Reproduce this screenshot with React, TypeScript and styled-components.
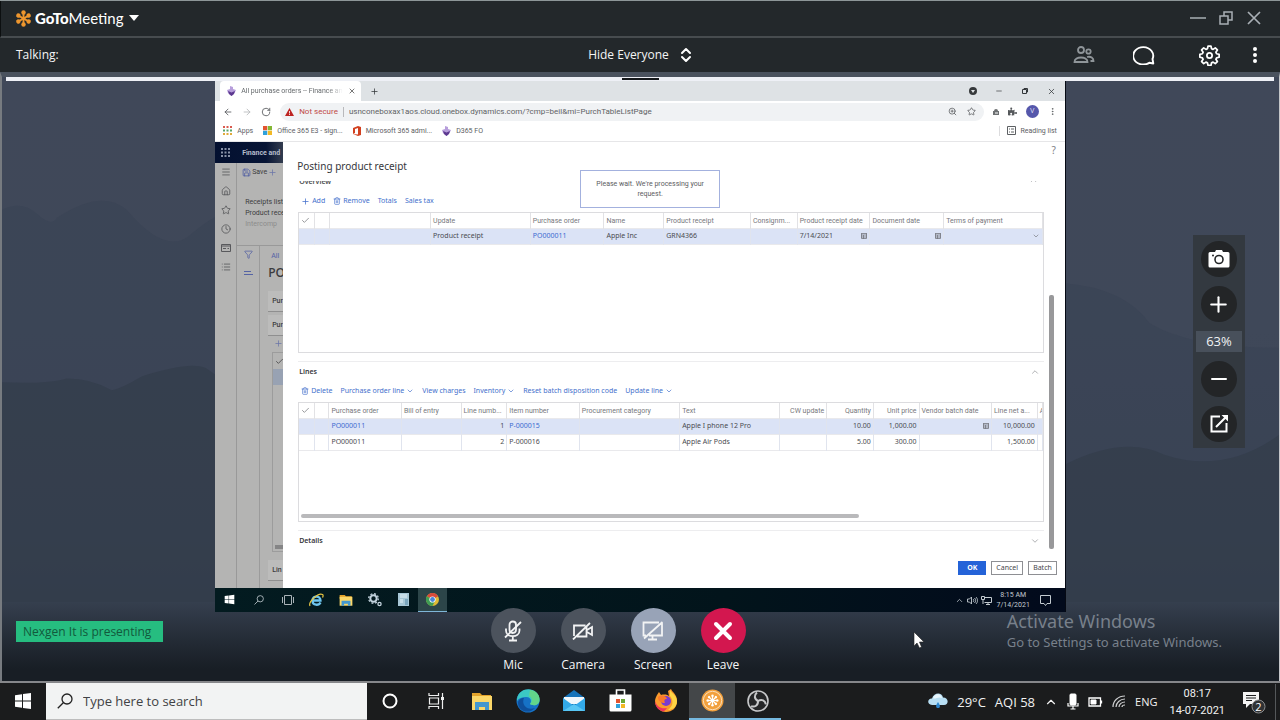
import React from "react";
import styled, { createGlobalStyle } from "styled-components";
import {
  Check,
  ChevronDown,
  ChevronUp,
  Clock,
  Filter,
  House,
  List,
  Menu,
  Minus,
  MoreVertical,
  Newspaper,
  Plus,
  RotateCw,
  ArrowLeft,
  ArrowRight,
  Save,
  Star,
  Trash2,
  X,
  ZoomIn,
} from "lucide-react";
import { FaPuzzlePiece, FaWindows } from "react-icons/fa";

const GlobalStyle = createGlobalStyle`
  * {
    box-sizing: border-box;
  }

  body {
    margin: 0;
    background: #1b1c1d;
    font-family: "Open Sans", "Noto Sans", sans-serif;
  }

  button {
    border: none;
    padding: 0;
    background: none;
    color: inherit;
    font: inherit;
    cursor: pointer;
  }

  svg {
    display: block;
    flex: none;
  }
`;

const Screen = styled.div`
  display: flex;
  flex-direction: column;
  min-height: 100vh;
`;

// Meeting window
const MeetingWindow = styled.div`
  display: flex;
  flex-direction: column;
  flex: 1;
  border-top: 1px solid #8d9698;
  border-bottom: 2px solid #86878a;
`;

const TitleBar = styled.header`
  display: flex;
  align-items: center;
  justify-content: space-between;
  height: 37px;
  padding: 0 18px 1px 14px;
  border-left: 1px solid #0c0f10;
  border-bottom: 2px solid #474c4f;
  background: #23282b;
  color: #fff;
`;

const Brand = styled.button`
  display: flex;
  align-items: center;
  gap: 3px;
  font-family: Lato, sans-serif;
  font-size: 15px;
  line-height: 20px;

  b {
    font-weight: 900;
  }
`;

const Caret = styled.span`
  margin-left: 3px;
  border: 5px solid transparent;
  border-top: 6px solid #fff;
  border-bottom: 0;
`;

const WindowButtons = styled.div`
  display: flex;
  gap: 12px;
  color: #a9afb5;
`;

const TalkingBar = styled.div`
  display: grid;
  grid-template-columns: 1fr auto 1fr;
  align-items: center;
  height: 34px;
  padding: 0 16px 0 16px;
  background: #23282b;
  color: #f4f5f5;
  font-size: 12px;
  line-height: 16px;
`;

const HideButton = styled.button`
  display: flex;
  align-items: center;
  gap: 11px;
`;

const HeaderActions = styled.div`
  display: flex;
  align-items: center;
  justify-content: flex-end;

  button {
    display: grid;
    place-items: center;
  }

  button:nth-child(2) {
    margin-left: 38px;
  }

  button:nth-child(3) {
    margin-left: 44px;
  }

  button:nth-child(4) {
    margin-left: 26px;
  }
`;

const Stage = styled.main`
  position: relative;
  display: flex;
  flex-direction: column;
  flex: 1;
  padding: 0 3px 69px;
  border-top: 5px solid #4a525e;
  border-left: 2px solid #777b80;
  border-right: 1px solid #c4c6c9;
  background: linear-gradient(
    180deg,
    #404859 0,
    #3f4859 42%,
    #3b4455 75%,
    #353f4e 87%,
    #222933 94%,
    #181e25 98%
  );
`;

const Mountains = styled.svg`
  position: absolute;
  inset: 0;
  width: 100%;
  height: 87%;
`;

const DragStrip = styled.div`
  position: relative;
  display: flex;
  align-items: center;
  justify-content: center;
  height: 4px;
  margin: 0 2px 0 1px;
  background: #eef0f6;
`;

const DragHandle = styled.span`
  width: 37px;
  height: 2px;
  background: #15181b;
`;

const ShareArea = styled.div`
  position: relative;
  display: grid;
  grid-template-columns: 210fr 850fr 210fr;
  flex: 1;
`;

const ZoomColumn = styled.aside`
  display: flex;
  align-items: flex-start;
  justify-content: flex-end;
  padding: 154px 31px 0 0;
`;

const ZoomPanel = styled.div`
  display: flex;
  flex-direction: column;
  align-items: center;
  gap: 9px;
  width: 52px;
  padding: 6px 3px;
  background: #333940;
`;

const RoundButton = styled.button`
  display: grid;
  place-items: center;
  width: 36px;
  height: 36px;
  border-radius: 50%;
  background: #232527;
  color: #fff;
`;

const ZoomLevel = styled.output`
  width: 100%;
  background: #48505b;
  color: #f1f3f4;
  font-size: 13px;
  line-height: 21px;
  text-align: center;
`;

// Shared desktop
const Desktop = styled.section`
  display: flex;
  flex-direction: column;
  min-width: 0;
  border-right: 1px solid #060a14;
  background: #fff;
  color: #4d4d50;
  font-family: Roboto, "Open Sans", sans-serif;
  font-size: 7px;
  line-height: 10px;
`;

const TabStrip = styled.div`
  display: flex;
  align-items: center;
  height: 20px;
  padding-left: 5px;
  background: #dee2e5;
  color: #33373a;
`;

const Tab = styled.div`
  display: flex;
  align-items: center;
  gap: 5px;
  width: 141px;
  height: 100%;
  padding: 0 5px 0 7px;
  border-radius: 4px 4px 0 0;
  background: #fff;
  color: #666a6d;
`;

const TabTitle = styled.span`
  flex: 1;
  white-space: nowrap;
  mask-image: linear-gradient(90deg, #000 85%, transparent);
`;

const NewTab = styled.button`
  margin-left: 9px;
`;

const BrowserButtons = styled.div`
  display: flex;
  align-items: center;
  gap: 18px;
  margin-left: auto;
  padding-right: 9px;
`;

const AddressRow = styled.div`
  display: flex;
  align-items: center;
  gap: 9px;
  height: 21px;
  padding: 0 8px;
  color: #55585b;
`;

const AddressBar = styled.div`
  display: flex;
  align-items: center;
  gap: 5px;
  flex: 1;
  height: 18px;
  padding: 0 8px 0 5px;
  border-radius: 9px;
  background: #f0f2f4;
`;

const NotSecure = styled.span`
  padding-right: 5px;
  border-right: 1px solid #b9b9bc;
  color: #c04a48;
  font-size: 8px;
`;

const AddressInput = styled.input`
  flex: 1;
  min-width: 0;
  padding: 0;
  border: 0;
  background: none;
  color: #5f6265;
  font: inherit;
  font-size: 8px;
`;

const Avatar = styled.span`
  width: 13px;
  border-radius: 50%;
  background: #5557ab;
  color: #dcdcf4;
  line-height: 13px;
  text-align: center;
`;

const Bookmarks = styled.nav`
  display: flex;
  align-items: center;
  gap: 10px;
  height: 20px;
  padding: 0 8px 2px;
  border-bottom: 1px solid #e6e6e8;
`;

const Bookmark = styled.a`
  display: flex;
  align-items: center;
  gap: 5px;
  color: #5d6063;
  text-decoration: none;
  white-space: nowrap;

  &:last-child {
    margin-left: auto;
    padding-left: 7px;
    border-left: 1px solid #dcdcde;
  }
`;

const AppArea = styled.div`
  display: grid;
  grid-template-columns: 68fr 782fr;
  flex: 1;
`;

const Backdrop = styled.div`
  display: flex;
  flex-direction: column;
  min-width: 0;
  overflow: hidden;
  background: #b4b4b3;
  color: #3c3c3e;
  white-space: nowrap;
`;

const AppHeader = styled.div`
  display: flex;
  align-items: center;
  gap: 12px;
  height: 21px;
  padding-left: 6px;
  background: linear-gradient(90deg, #031030, #071535 75%, #333c4f);
  color: #b5bccb;
  font-weight: 700;
`;

const BackdropBody = styled.div`
  display: flex;
  flex: 1;
`;

const Rail = styled.div`
  display: flex;
  flex-direction: column;
  flex: none;
  align-items: center;
  gap: 9px;
  width: 22px;
  padding-top: 4px;
  border-right: 1px solid #999;
  color: #58595c;
`;

const RecordArea = styled.div`
  display: flex;
  flex-direction: column;
  width: 46px;
`;

const RecordMenu = styled.div`
  height: 83px;
  padding: 4px 0 0 8px;
  border-bottom: 1px solid #999;
`;

const RecordAction = styled.p<{ $muted?: boolean }>`
  margin: 0;
  color: ${(props) => (props.$muted ? "#8c8c8c" : "inherit")};
  line-height: 11px;
`;

const SaveLine = styled.div`
  display: flex;
  align-items: center;
  gap: 1px;
  margin: 0 0 20px -3px;
`;

const RecordBody = styled.div`
  display: flex;
  flex: 1;
`;

const FilterRail = styled.div`
  display: flex;
  flex-direction: column;
  flex: none;
  align-items: center;
  gap: 10px;
  width: 23px;
  padding-top: 4px;
  border-right: 1px solid #9b9b9b;
  color: #5563a4;
`;

const RecordPage = styled.div`
  display: flex;
  flex-direction: column;
  flex: 1;
  min-width: 0;
  padding: 5px 0 4px 8px;
  color: #3c3c3e;
`;

const RecordLink = styled.a`
  padding-left: 3px;
  color: #5261a6;
  text-decoration: none;
`;

const RecordTitle = styled.strong`
  margin-bottom: 6px;
  font-family: "Open Sans", sans-serif;
  font-size: 12px;
  font-weight: 600;
  line-height: 24px;
`;

const RecordCard = styled.div`
  margin-bottom: 3px;
  padding-left: 4px;
  border-bottom: 1px solid #8f8f8f;
  background: #bcbcbb;
  font-weight: 500;
  line-height: 20px;
`;

const RecordGrid = styled.div`
  display: flex;
  flex-direction: column;
  justify-content: space-between;
  flex: 1;
  margin: 4px 0 8px 4px;
  border: 1px solid #9c9c9c;
  border-right: 0;
`;

const RecordGridHead = styled.div`
  height: 32px;
  padding: 4px 0 0 2px;
  border-bottom: 16px solid #98a2b3;
`;

const RecordGridBar = styled.span`
  height: 4px;
  margin: 0 0 2px 2px;
  background: #858586;
`;

// Posting dialog
const Dialog = styled.form`
  position: relative;
  display: flex;
  flex-direction: column;
  min-width: 0;
  background: #fff;
  font-family: "Noto Sans", "Open Sans", sans-serif;
`;

const DialogTop = styled.div`
  display: flex;
  align-items: flex-end;
  justify-content: space-between;
  height: 39px;
  padding: 0 9px 7px 14px;
`;

const DialogTitle = styled.h1`
  margin: 0;
  color: #36373b;
  font-size: 10px;
  font-weight: 400;
  line-height: 16px;
`;

const HelpButton = styled.button`
  align-self: flex-start;
  color: #808185;
  font-size: 10px;
  line-height: 16px;
`;

const DialogBody = styled.div`
  display: flex;
  flex: 1;
`;

const Sections = styled.div`
  display: flex;
  flex-direction: column;
  flex: 1;
  min-width: 0;
  padding: 0 0 3px 15px;
`;

const ScrollGutter = styled.div`
  display: flex;
  align-items: flex-end;
  width: 21px;
  padding: 0 0 3px 5px;
`;

const ScrollThumb = styled.span`
  width: 5px;
  height: 69%;
  border-radius: 2px;
  background: #98989a;
`;

// Half scrolled away under the title
const ClippedHeading = styled.div`
  display: flex;
  align-items: flex-end;
  justify-content: space-between;
  height: 4px;
  margin-bottom: 5px;
  padding: 0 6px 0 1px;
  overflow: hidden;
  color: #4c4d50;
  font-weight: 600;
  line-height: 6px;

  svg {
    color: #a0a1a5;
  }
`;

const SectionHeading = styled.button`
  display: flex;
  align-items: center;
  justify-content: space-between;
  height: 19px;
  margin-top: 8px;
  padding: 2px 4px 0 1px;
  border-top: 1px solid #ededef;
  color: #36373b;
  font-weight: 600;

  svg {
    color: #a0a1a5;
  }
`;

const Toolbar = styled.div`
  display: flex;
  align-items: center;
  gap: 8px;
  height: 22px;
  padding-left: 3px;
  color: #4470cc;

  button {
    display: flex;
    align-items: center;
    gap: 2px;
    white-space: nowrap;
  }
`;

const GridFrame = styled.div<{ $grow?: boolean }>`
  display: flex;
  flex-direction: column;
  justify-content: space-between;
  flex: ${(props) => (props.$grow ? "1" : "none")};
  min-height: 120px;
  border: 1px solid #dcdcdf;
`;

const Table = styled.table`
  width: 100%;
  table-layout: fixed;
  border-collapse: collapse;
`;

const HeadCell = styled.th<{ $right?: boolean }>`
  height: 15px;
  padding: 1px 2px 0;
  border-right: 1px solid #e2e2e5;
  overflow: hidden;
  color: #77787c;
  font-family: Roboto, sans-serif;
  font-weight: 400;
  text-align: ${(props) => (props.$right ? "right" : "left")};
  white-space: nowrap;
`;

const Row = styled.tr<{ $selected?: boolean }>`
  border-bottom: 1px solid #e9e9ec;
  background: ${(props) => (props.$selected ? "#dbe3f6" : "#fff")};
`;

const Cell = styled.td<{ $right?: boolean }>`
  height: 16px;
  padding: 0 2px;
  border-right: 1px solid #e0e4ee;
  color: #4a4b50;
  text-align: ${(props) => (props.$right ? "right" : "left")};
  white-space: nowrap;

  svg {
    margin-left: auto;
    color: #75777f;
  }
`;

const CellLink = styled.a`
  color: #3c6bd0;
  text-decoration: none;
`;

const DateCell = styled.div`
  display: flex;
  align-items: center;
`;

const HorizontalThumb = styled.span`
  width: 75%;
  height: 4px;
  margin: 0 0 3px 2px;
  border-radius: 2px;
  background: #b9b9bb;
`;

const DialogFooter = styled.footer`
  display: flex;
  align-items: center;
  justify-content: flex-end;
  gap: 5px;
  height: 36px;
  padding: 0 8px 4px 0;
`;

const DialogButton = styled.button<{ $primary?: boolean }>`
  height: 14px;
  padding: 0 ${(props) => (props.$primary ? "8px" : "4px")};
  border: 1px solid ${(props) => (props.$primary ? "#2463d8" : "#8e8f93")};
  background: ${(props) => (props.$primary ? "#2463d8" : "#fff")};
  color: ${(props) => (props.$primary ? "#fff" : "#47484c")};
  font-weight: ${(props) => (props.$primary ? "700" : "400")};
  line-height: 12px;
`;

const WaitBox = styled.div`
  position: absolute;
  top: 28px;
  left: 38%;
  width: 140px;
  padding: 8px 12px;
  border: 1px solid #a3b1de;
  background: #fff;
  color: #5c5d61;
  font-family: Roboto, sans-serif;
  text-align: center;
`;

// Taskbar inside the shared desktop
const RemoteTaskbar = styled.div`
  display: flex;
  align-items: center;
  height: 24px;
  background: linear-gradient(90deg, #031b20, #02141b 60%, #020a1c);
  color: #c3cbd0;
`;

const RemoteApp = styled.button<{ $active?: boolean }>`
  display: grid;
  place-items: center;
  width: 29px;
  height: 100%;
  background: ${(props) => (props.$active ? "#2c4549" : "none")};
  border-bottom: 1px solid ${(props) => (props.$active ? "#7fb6d8" : "transparent")};
`;

const RemoteTray = styled.div`
  display: flex;
  align-items: center;
  gap: 3px;
  margin-left: auto;
  padding-right: 14px;

  time {
    margin: 0 7px 0 2px;
    text-align: center;
  }
`;

// Controls laid over the stage
const Presenting = styled.div`
  position: absolute;
  left: 14px;
  bottom: 39px;
  padding: 0 12px 0 7px;
  background: #26bd80;
  color: #12593c;
  font-size: 12px;
  line-height: 21px;
`;

const Controls = styled.div`
  position: absolute;
  right: 0;
  bottom: 8px;
  left: 0;
  display: flex;
  justify-content: center;
  padding-right: 45px;
`;

const Control = styled.button`
  display: flex;
  flex-direction: column;
  align-items: center;
  gap: 3px;
  width: 70px;
  color: #f5f6f7;
  font-size: 12px;
  line-height: 17px;
`;

const ControlCircle = styled.span<{ $color: string }>`
  display: grid;
  place-items: center;
  width: 45px;
  height: 45px;
  border-radius: 50%;
  background: ${(props) => props.$color};
`;

const Watermark = styled.div`
  position: absolute;
  right: 57px;
  bottom: 29px;
  color: #78808b;
  font-family: "Noto Sans", sans-serif;
  font-size: 13px;
  line-height: 20px;

  p {
    margin: 0;
  }

  p:first-child {
    font-size: 18px;
    line-height: 22px;
  }
`;

const Pointer = styled.svg`
  position: absolute;
  right: 354px;
  bottom: 32px;
`;

// Host taskbar
const Taskbar = styled.footer`
  display: flex;
  height: 37px;
  background: #1b1c1d;
  color: #f2f2f2;
`;

const TaskButton = styled.button<{ $active?: boolean; $running?: boolean }>`
  display: grid;
  place-items: center;
  width: 46px;
  background: ${(props) => (props.$active ? "#444749" : "none")};
  border-bottom: 2px solid ${(props) => (props.$active || props.$running ? "#76b9e0" : "transparent")};
`;

const SearchBox = styled.label`
  display: flex;
  align-items: center;
  gap: 10px;
  flex: 0 1 321px;
  padding-left: 11px;
  border-bottom: 1px solid #bdbdbd;
  background: #f2f3f3;
  color: #222;

  input {
    flex: 1;
    min-width: 0;
    padding: 0;
    border: 0;
    outline: 0;
    background: none;
    font: 13px "Open Sans", sans-serif;
  }

  input::placeholder {
    color: #414244;
    opacity: 1;
  }
`;

const Tray = styled.div`
  display: flex;
  align-items: center;
  gap: 9px;
  margin-left: auto;
  padding-right: 4px;
  font-size: 13px;
  white-space: nowrap;
`;

const Language = styled.span`
  font-size: 11px;
`;

const HostClock = styled.time`
  margin: 0 8px 0 3px;
  font-family: Roboto, sans-serif;
  font-size: 11px;
  line-height: 17px;
  text-align: center;
`;

const ShowDesktop = styled.span`
  width: 1px;
  height: 36px;
  background: #55585a;
`;

const PETALS = [0, 45, 90, 135, 180, 225, 270, 315];
const SIX_PETALS = [0, 60, 120, 180, 240, 300];

const Daisy = () => (
  <svg width="17" height="17" viewBox="-10 -10 20 20">
    {SIX_PETALS.map((angle) => (
      <g key={angle} transform={`rotate(${angle})`}>
        <path d="M0-1V-7" stroke="#ee962e" strokeWidth="2.200" />
        <circle cy="-7" r="2.600" fill="#ee962e" />
      </g>
    ))}
    <circle r="2" fill="#ee962e" />
  </svg>
);

const Sorter = () => (
  <svg width="12" height="16" viewBox="0 0 12 16" fill="none" stroke="#fff" strokeWidth="2" strokeLinejoin="round">
    <path d="M2 6l4-4 4 4M2 10l4 4 4-4" strokeLinecap="round" />
  </svg>
);

const People = () => (
  <svg width="22" height="18" viewBox="0 0 22 18" fill="none" stroke="#8f9599" strokeWidth="1.800">
    <circle cx="8" cy="4" r="3" />
    <circle cx="15.500" cy="5.500" r="2.200" />
    <path d="M1.500 16c0-6 13-6 13 0zM14 11c4-1 6.500 1 6.500 4h-3" />
  </svg>
);

const Bubble = () => (
  <svg width="22" height="20" viewBox="0 0 22 20" fill="none" stroke="#fff" strokeWidth="1.900" strokeLinejoin="round">
    <path d="M19.500 14l.8 4.500-4-.8A10 8.700 0 1 1 19.500 14z" />
  </svg>
);

const Gear = () => (
  <svg width="21" height="21" viewBox="-12 -12 24 24" fill="none" stroke="#fff" strokeWidth="2" strokeLinejoin="round">
    <path d="M-1.700-10.700h3.400l.6 2.900 1.800.8 2.500-1.700 2.400 2.400-1.700 2.500.8 1.800 2.900.6v3.400l-2.900.6-.8 1.800 1.700 2.500-2.400 2.400-2.500-1.700-1.800.8-.6 2.900h-3.400l-.6-2.900-1.800-.8-2.500 1.700-2.400-2.400 1.700-2.500-.8-1.800-2.900-.6v-3.400l2.900-.6.8-1.800-1.700-2.500 2.400-2.400 2.500 1.700 1.800-.8z" />
    <circle r="3" />
  </svg>
);

const D365 = () => (
  <svg width="9" height="10" viewBox="0 0 9 10">
    <path d="M3 0l3 1v2l3 1-1.500 3L4.500 10 1 7 0 4l3-1z" fill="#b79edb" />
    <path d="M1 5l3.500 1.500L8 5 7 8 4.500 10 2 8z" fill="#5d3990" />
  </svg>
);

const DotGrid = ({ colors, size = 9 }: { colors: string[]; size?: number }) => (
  <svg width={size} height={size} viewBox="0 0 9 9">
    {[0, 1, 2].map((r) =>
      [0, 1, 2].map((c) => (
        <rect key={`${r}${c}`} x={c * 3.5} y={r * 3.5} width="2" height="2" fill={colors[r % colors.length]} />
      ))
    )}
  </svg>
);

const FourSquares = ({ size }: { size: number }) => (
  <svg width={size} height={size} viewBox="0 0 10 10">
    <path d="M0 0h4.700v4.700H0z" fill="#e35430" />
    <path d="M5.300 0H10v4.700H5.300z" fill="#83b735" />
    <path d="M0 5.300h4.700V10H0z" fill="#2ea1dc" />
    <path d="M5.300 5.300H10V10H5.300z" fill="#f2b824" />
  </svg>
);

const OfficeMark = () => (
  <svg width="8" height="10" viewBox="0 0 8 10">
    <path d="M0 2l5-2 3 1v8l-3 1-5-2 5 .5V2L2 3v4L0 8z" fill="#d2401f" />
  </svg>
);

const Warning = () => (
  <svg width="9" height="8" viewBox="0 0 9 8">
    <path d="M4.500 0L9 8H0z" fill="#bd2422" />
    <path d="M4.500 3v2.500M4.500 6v1" stroke="#f0d5d5" />
  </svg>
);

const CalendarMark = () => (
  <svg width="6" height="6" viewBox="0 0 6 6" fill="none" stroke="currentColor">
    <path d="M0 .5h6M.5.5v5h5v-5M0 2h6M2.500 2v4M0 4h6" strokeWidth=".8" />
  </svg>
);

const Folder = ({ size }: { size: number }) => (
  <svg width={size} height={size} viewBox="0 0 22 22">
    <path d="M1 3h8l2 2h9v4H1z" fill="#e3a32b" />
    <path d="M1 6h20v14H1z" fill="#fbd769" />
    <path d="M4 12h14v8h-4v-3H8v3H4z" fill="#4397cf" />
  </svg>
);

const InternetExplorer = () => (
  <svg width="15" height="14" viewBox="0 0 15 14" fill="none">
    <path d="M3.500 7.500h8c0-5-8-5.500-8 0 0 5.500 6.500 5 8 2" stroke="#6ec5ef" strokeWidth="2.300" />
    <path d="M1 13C-1 9 9-.5 13.500 1.500c1 .5.500 2 0 3" stroke="#e8c744" strokeWidth="1.200" />
  </svg>
);

const Cogs = () => (
  <svg width="14" height="14" viewBox="0 0 14 14" fill="none" stroke="#c3d3de">
    <circle cx="5.500" cy="5.500" r="3.200" strokeWidth="2" />
    <circle cx="5.500" cy="5.500" r="4.800" strokeWidth="1.300" strokeDasharray="1.900 1.870" />
    <circle cx="11.500" cy="11" r="1.600" strokeWidth="1.300" />
  </svg>
);

const ServerIcon = () => (
  <svg width="11" height="13" viewBox="0 0 11 13">
    <path d="M0 0h11v13H0z" fill="#a7c7d6" />
    <path d="M2 2h7M2 4h7M2 7h3M2 9h3" stroke="#e8f4fa" />
    <path d="M7 6h3v6H7z" fill="#7ba6bd" />
  </svg>
);

const Chrome = () => (
  <svg width="13" height="13" viewBox="-10 -10 20 20">
    <circle r="10" fill="#e0ba35" />
    <path d="M0 0L-8.700-5A10 10 0 0 1 8.700-5z" fill="#d84a3b" />
    <path d="M0 0L-8.700-5A10 10 0 0 0 0 10l4-8z" fill="#3f9d55" />
    <circle r="4.800" fill="#fff" />
    <circle r="3.700" fill="#4a86d8" />
  </svg>
);

const TaskViewSmall = () => (
  <svg width="12" height="10" viewBox="0 0 12 10" fill="none" stroke="#aab3b8">
    <path d="M2.500.5h7v9h-7zM.5 2v6M11.500 2v6" />
  </svg>
);

const SpeakerSmall = () => (
  <svg width="11" height="9" viewBox="0 0 11 9" fill="none" stroke="#c3cbd0" strokeWidth=".9">
    <path d="M.5 3h2l2-2v7l-2-2h-2zM6 3c1 1 1 2 0 3M7.500 2c1.500 1.500 1.500 3.500 0 5M9 1c2 2 2 5 0 7" />
  </svg>
);

const NetworkSmall = () => (
  <svg width="11" height="9" viewBox="0 0 11 9" fill="none" stroke="#c3cbd0">
    <path d="M4 1.500h6.500v5H3.500M5 8.500h4M7 6v2M.5.5h3v3h-3zM2 3.500V8" />
  </svg>
);

const NoteSmall = () => (
  <svg width="11" height="11" viewBox="0 0 11 11" fill="none" stroke="#c3cbd0">
    <path d="M.5.5h10v8H7l-1.500 2L4 8.500H.5z" />
  </svg>
);

const CameraSolid = () => (
  <svg width="22" height="18" viewBox="0 0 22 18">
    <path d="M2 2h5l1-2h6l1 2h5q1.500 0 1.500 1.500V16q0 1.500-1.500 1.500H2Q.5 17.500.5 16V3.500Q.5 2 2 2z" fill="#fff" />
    <circle cx="11" cy="9.500" r="4" fill="none" stroke="#232527" strokeWidth="1.600" />
    <circle cx="5" cy="5.500" r="1" fill="#232527" />
  </svg>
);

const PopOut = () => (
  <svg width="20" height="20" viewBox="0 0 20 20" fill="none" stroke="#fff" strokeWidth="2">
    <path d="M11 2.500H2.500v15h15V9M7 13L17 3" />
    <path d="M12.500 1H19v6.500z" fill="#fff" stroke="none" />
  </svg>
);

const MicOffIcon = () => (
  <svg width="20" height="22" viewBox="0 0 20 22" fill="none" stroke="#f2f3f4" strokeWidth="1.800">
    <rect x="6.500" y="1.500" width="6.500" height="11.500" rx="3.200" />
    <path d="M3 8.500v2c0 7.500 13.500 7.500 13.500 0v-2M9.800 16.500V20M6 20.500h8M2 17.500L18 2" />
  </svg>
);

const CameraOffIcon = () => (
  <svg width="24" height="18" viewBox="0 0 24 18" fill="none" stroke="#f2f3f4" strokeWidth="1.800">
    <path d="M3 14V3.500h11.500M15.500 5v9.500H6M16 8l5-3v8l-5-3M2 17.500L19 1" />
  </svg>
);

const ScreenOffIcon = () => (
  <svg width="22" height="20" viewBox="0 0 22 20" fill="none" stroke="#f2f3f4" strokeWidth="1.800">
    <path d="M17 1.500H1.500v13H4M20 4v10.500H7M20 1.500v4M6 18.500h9M10.500 15v3M2 17.500L20.500 1" />
  </svg>
);

const LeaveIcon = () => (
  <svg width="20" height="20" viewBox="0 0 20 20">
    <path d="M3 3l14 14M17 3L3 17" stroke="#fff" strokeWidth="4" strokeLinecap="round" />
  </svg>
);

const StartIcon = () => (
  <svg width="16" height="16" viewBox="0 0 16 16" fill="#fff">
    <path d="M0 2.200l7-1v6.300H0zM8 1l8-1v7.500H8zM0 8.500h7v6.300l-7-1zM8 8.500h8V16l-8-1z" />
  </svg>
);

const SearchGlass = ({ size }: { size: number }) => (
  <svg width={size} height={size} viewBox="0 0 16 16" fill="none" stroke="currentColor" strokeWidth="1.300">
    <circle cx="10" cy="6" r="5" />
    <path d="M6.500 9.500L.8 15.200" />
  </svg>
);

const TaskViewIcon = () => (
  <svg width="17" height="16" viewBox="0 0 17 16" fill="none" stroke="#eee" strokeWidth="1.200">
    <path d="M1 0v2.500h9.500V0M1.500 5h9v6h-9zM1 16v-2.500h9.500V16M14.500 0v16" />
    <path d="M13 4h3v3h-3z" fill="#eee" stroke="none" />
  </svg>
);

const EdgeIcon = () => (
  <svg width="24" height="24" viewBox="0 0 24 24">
    <circle cx="12" cy="12" r="11.500" fill="#1672c6" />
    <path d="M1 10C3-3 23-3 23.500 11c0 6-7 6-9.500 4 2-3 1-7-4-7-4 0-7 1-9 4z" fill="#3bc8c4" />
    <path d="M14 1c8 1 10 7 9.500 10 0 6-7 6-9.500 4 4-4 1-7-1-8z" fill="#62d68a" />
    <path d="M8 9c-3 7 3 13 11 10-6 7-17 3-17-5 0-3 3-5 6-5z" fill="#0e4f9b" />
  </svg>
);

const MailIcon = () => (
  <svg width="24" height="22" viewBox="0 0 24 22">
    <path d="M1 8L12 0l11 8v13H1z" fill="#1673b9" />
    <path d="M2 7h20v7H2z" fill="#f1f7fb" />
    <path d="M1 8l11 8 11-8v13H1z" fill="#33a9e8" />
    <path d="M1 21l11-7 11 7z" fill="#58c6f4" />
  </svg>
);

const StoreIcon = () => (
  <svg width="23" height="23" viewBox="0 0 23 23">
    <path d="M7.500 6V1h8v5" fill="none" stroke="#fff" strokeWidth="1.600" />
    <path d="M.5 5.500h22V21q0 1.500-1.500 1.500H2Q.5 22.500.5 21z" fill="#fff" />
    <path d="M7 10h4v4H7z" fill="#e35430" />
    <path d="M12 10h4v4h-4z" fill="#6ba935" />
    <path d="M7 15h4v4H7z" fill="#2ea1dc" />
    <path d="M12 15h4v4h-4z" fill="#f2b824" />
  </svg>
);

const FirefoxIcon = () => (
  <svg width="22" height="23" viewBox="0 0 22 23">
    <path d="M2 6l2-3 2 3c4-1 7 0 8 1l-1-5 3-2c1 3 6 5 6 12 0 7-5 11-11 11S0 18 0 12c0-2 1-4 2-6z" fill="#fb9a2c" />
    <path d="M15 1c1 3 7 5 7 11 0 7-6 9-9 9 5-4 6-9 2-14z" fill="#ffd545" />
    <path d="M0 12c2 6 6 8 12 7-2 3-4 4-5 3-4-1-7-5-7-10z" fill="#ee335b" />
    <circle cx="11" cy="12" r="5" fill="#7a3bd0" />
    <path d="M3 8c4-3 8-1 9 2-3 0-3 2-2 4-4 0-7-2-7-6z" fill="#fb7a2b" />
  </svg>
);

const GoToIcon = () => (
  <svg width="23" height="23" viewBox="-12 -12 24 24">
    <circle r="11.500" fill="#f2a03c" />
    <circle r="9.600" fill="none" stroke="#fae0bd" />
    {PETALS.map((angle) => (
      <g key={angle} transform={`rotate(${angle})`}>
        <path d="M0 0V-5" stroke="#fff" strokeWidth="1.300" />
        <circle cy="-5" r="1.300" fill="#fff" />
      </g>
    ))}
  </svg>
);

const ObsIcon = () => (
  <svg width="22" height="22" viewBox="-11 -11 22 22" fill="none" stroke="#c7c8ca">
    <circle r="10" strokeWidth="1.600" fill="#252628" />
    {[0, 120, 240].map((angle) => (
      <path key={angle} transform={`rotate(${angle})`} d="M0 0C-4-2-4-6-1-8.500" strokeWidth="2" />
    ))}
  </svg>
);

const CloudIcon = () => (
  <svg width="20" height="17" viewBox="0 0 20 17">
    <path d="M4 12C-2 11 0 5 4 5.500 6-1 14-1 15 4.500c6 0 6 7.500 1 7.500z" fill="#b7def3" />
    <path d="M5 5C7 0 13 0 14 5 10 3 7 7 5 5z" fill="#e9f6fd" />
    <path d="M10 9c3 4 2 6 0 6s-3-2 0-6z" fill="#2c86cf" />
  </svg>
);

const MicTray = () => (
  <svg width="12" height="17" viewBox="0 0 12 17" fill="none" stroke="#fff">
    <rect x="3" y="1" width="6" height="11" rx="1" fill="#fff" />
    <path d="M1 10v3h10v-3M6 13v3M3.500 16h5" strokeWidth="1.200" />
  </svg>
);

const BatteryTray = () => (
  <svg width="15" height="10" viewBox="0 0 15 10" fill="none" stroke="#fff">
    <path d="M1 1h11.500v8H1zM13.500 3.500v3" strokeWidth="1.300" />
    <path d="M3 3h5v4H3z" fill="#fff" />
  </svg>
);

const WifiTray = () => (
  <svg width="14" height="13" viewBox="0 0 14 13" fill="none" stroke="#cfd0d1" strokeWidth="1.200">
    <path d="M1 12C1 6 6 1 13 1M4 12c0-4 4-8 9-8M7 12c0-3 3-5 6-5M10 12c0-1 1-2 3-2" />
  </svg>
);

const NotificationTray = () => (
  <svg width="24" height="24" viewBox="0 0 24 24">
    <path d="M1 2h16v12H8l-4 4v-4H1z" fill="#f4f4f4" />
    <path d="M4 5.500h10M4 8h10M4 10.500h6" stroke="#1b1c1d" />
    <circle cx="16.500" cy="16.500" r="6.500" fill="#303234" stroke="#8b8d8f" />
    <text x="16.500" y="20.500" fill="#fff" fontSize="11" textAnchor="middle">
      2
    </text>
  </svg>
);

const ORDER_WIDTHS = [15, 15, 102, 100, 74, 60, 87, 47, 73, 74, 99];
const ORDER_HEADS = [
  "",
  "",
  "Update",
  "Purchase order",
  "Name",
  "Product receipt",
  "Consignm...",
  "Product receipt date",
  "Document date",
  "Terms of payment",
];

const LINE_WIDTHS = [15, 15, 73, 60, 46, 73, 101, 101, 47, 47, 46, 73, 46, 5];
const LINE_HEADS = [
  "",
  "Purchase order",
  "Bill of entry",
  "Line numb...",
  "Item number",
  "Procurement category",
  "Text",
  "CW update",
  "Quantity",
  "Unit price",
  "Vendor batch date",
  "Line net a...",
  "A",
];
const RIGHT_HEADS = ["CW update", "Quantity", "Unit price"];

const lines = [
  { line: "1", item: "P-000015", text: "Apple I phone 12 Pro", quantity: "10.00", price: "1,000.00", net: "10,000.00" },
  { line: "2", item: "P-000016", text: "Apple Air Pods", quantity: "5.00", price: "300.00", net: "1,500.00" },
];

const Columns = ({ widths }: { widths: number[] }) => {
  const total = widths.reduce((sum, width) => sum + width, 0);

  return (
    <colgroup>
      {widths.map((width, index) => (
        <col key={index} style={{ width: `${(width / total) * 100}%` }} />
      ))}
    </colgroup>
  );
};

const OrdersGrid = () => (
  <GridFrame $grow>
    <Table>
      <Columns widths={ORDER_WIDTHS} />
      <thead>
        <Row>
          <HeadCell>
            <Check size={9} strokeWidth={2} />
          </HeadCell>
          {ORDER_HEADS.map((head, index) => (
            <HeadCell key={index}>{head}</HeadCell>
          ))}
        </Row>
      </thead>
      <tbody>
        <Row $selected>
          <Cell />
          <Cell />
          <Cell />
          <Cell>Product receipt</Cell>
          <Cell>
            <CellLink href="#order">PO000011</CellLink>
          </Cell>
          <Cell>Apple Inc</Cell>
          <Cell>GRN4366</Cell>
          <Cell />
          <Cell>
            <DateCell>
              7/14/2021 <CalendarMark />
            </DateCell>
          </Cell>
          <Cell>
            <CalendarMark />
          </Cell>
          <Cell>
            <ChevronDown size={8} />
          </Cell>
        </Row>
      </tbody>
    </Table>
  </GridFrame>
);

const LinesGrid = () => (
  <GridFrame>
    <Table>
      <Columns widths={LINE_WIDTHS} />
      <thead>
        <Row>
          <HeadCell>
            <Check size={9} strokeWidth={2} />
          </HeadCell>
          {LINE_HEADS.map((head, index) => (
            <HeadCell key={index} $right={RIGHT_HEADS.includes(head)}>
              {head}
            </HeadCell>
          ))}
        </Row>
      </thead>
      <tbody>
        {lines.map((row, index) => {
          const selected = index === 0;

          return (
            <Row key={row.line} $selected={selected}>
              <Cell />
              <Cell />
              <Cell>{selected ? <CellLink href="#order">PO000011</CellLink> : "PO000011"}</Cell>
              <Cell />
              <Cell $right>{row.line}</Cell>
              <Cell>{selected ? <CellLink href="#item">{row.item}</CellLink> : row.item}</Cell>
              <Cell />
              <Cell>{row.text}</Cell>
              <Cell />
              <Cell $right>{row.quantity}</Cell>
              <Cell $right>{row.price}</Cell>
              <Cell>{selected && <CalendarMark />}</Cell>
              <Cell $right>{row.net}</Cell>
              <Cell />
            </Row>
          );
        })}
      </tbody>
    </Table>
    <HorizontalThumb />
  </GridFrame>
);

const PostingDialog = () => (
  <Dialog onSubmit={(event) => event.preventDefault()}>
    <DialogTop>
      <DialogTitle>Posting product receipt</DialogTitle>
      <HelpButton type="button">?</HelpButton>
    </DialogTop>
    <DialogBody>
      <Sections>
        <ClippedHeading>
          Overview <ChevronUp size={9} />
        </ClippedHeading>
        <Toolbar>
          <button type="button">
            <Plus size={9} /> Add
          </button>
          <button type="button">
            <Trash2 size={8} /> Remove
          </button>
          <button type="button">Totals</button>
          <button type="button">Sales tax</button>
        </Toolbar>
        <OrdersGrid />
        <SectionHeading type="button">
          Lines <ChevronUp size={10} />
        </SectionHeading>
        <Toolbar>
          <button type="button">
            <Trash2 size={8} /> Delete
          </button>
          <button type="button">
            Purchase order line <ChevronDown size={8} />
          </button>
          <button type="button">View charges</button>
          <button type="button">
            Inventory <ChevronDown size={8} />
          </button>
          <button type="button">Reset batch disposition code</button>
          <button type="button">
            Update line <ChevronDown size={8} />
          </button>
        </Toolbar>
        <LinesGrid />
        <SectionHeading type="button">
          Details <ChevronDown size={10} />
        </SectionHeading>
      </Sections>
      <ScrollGutter>
        <ScrollThumb />
      </ScrollGutter>
    </DialogBody>
    <DialogFooter>
      <DialogButton $primary>OK</DialogButton>
      <DialogButton type="button">Cancel</DialogButton>
      <DialogButton type="button">Batch</DialogButton>
    </DialogFooter>
    <WaitBox role="status">Please wait. We're processing your request.</WaitBox>
  </Dialog>
);

const RecordBackdrop = () => (
  <Backdrop>
    <AppHeader>
      <DotGrid colors={["#8892a8"]} />
      Finance and
    </AppHeader>
    <BackdropBody>
      <Rail>
        <Menu size={10} />
        <House size={10} />
        <Star size={10} />
        <Clock size={10} />
        <svg width="10" height="10" viewBox="0 0 10 10" fill="none" stroke="currentColor">
          <path d="M.5 1.500h9v7h-9zM0 3h10M2 5.500h3M6.500 5.500h1.500" />
        </svg>
        <List size={10} />
      </Rail>
      <RecordArea>
        <RecordMenu>
          <SaveLine>
            <Save size={9} color="#4a58a0" /> Save <Plus size={9} color="#6b75a8" />
          </SaveLine>
          <RecordAction>Receipts list</RecordAction>
          <RecordAction>Product rece</RecordAction>
          <RecordAction $muted>Intercomp</RecordAction>
        </RecordMenu>
        <RecordBody>
          <FilterRail>
            <Filter size={9} />
            <svg width="9" height="9" viewBox="0 0 9 9" stroke="currentColor">
              <path d="M0 2.500h7M0 5.500h9" />
            </svg>
          </FilterRail>
          <RecordPage>
            <RecordLink href="#all">All</RecordLink>
            <RecordTitle>PO</RecordTitle>
            <RecordCard>Pur</RecordCard>
            <RecordCard>Pur</RecordCard>
            <Plus size={9} style={{ marginLeft: 6 }} color="#6b75a8" />
            <RecordGrid>
              <RecordGridHead>
                <Check size={9} />
              </RecordGridHead>
              <RecordGridBar />
            </RecordGrid>
            <RecordCard>Lin</RecordCard>
          </RecordPage>
        </RecordBody>
      </RecordArea>
    </BackdropBody>
  </Backdrop>
);

const SharedDesktop = () => (
  <Desktop>
    <TabStrip>
      <Tab>
        <D365 />
        <TabTitle>All purchase orders -- Finance an</TabTitle>
        <X size={8} color="#333" />
      </Tab>
      <NewTab aria-label="New tab">
        <Plus size={9} />
      </NewTab>
      <BrowserButtons>
        <svg width="8" height="8" viewBox="0 0 8 8">
          <circle cx="4" cy="4" r="4" fill="#36393b" />
          <path d="M2 3h4L4 6z" fill="#dee2e5" />
        </svg>
        <Minus size={8} />
        <svg width="8" height="8" viewBox="0 0 8 8" fill="none" stroke="currentColor">
          <path d="M1.500 2.500h4v4h-4zM3 2.500v-1h3.500V5H6" />
        </svg>
        <X size={9} />
      </BrowserButtons>
    </TabStrip>
    <AddressRow>
      <ArrowLeft size={10} />
      <ArrowRight size={10} color="#b5b7b9" />
      <RotateCw size={10} />
      <AddressBar>
        <Warning />
        <NotSecure>Not secure</NotSecure>
        <AddressInput
          aria-label="Address"
          defaultValue="usnconeboxax1aos.cloud.onebox.dynamics.com/?cmp=beil&mi=PurchTableListPage"
        />
        <ZoomIn size={9} />
        <Star size={9} style={{ marginLeft: 5 }} />
      </AddressBar>
      <svg width="6" height="8" viewBox="0 0 6 8">
        <path d="M1 3a2 2 0 0 1 4 0h1v4H0V3z" fill="#6d7072" />
        <path d="M2 5h3" stroke="#fff" />
      </svg>
      <FaPuzzlePiece size={9} />
      <Avatar>V</Avatar>
      <MoreVertical size={9} />
    </AddressRow>
    <Bookmarks>
      <Bookmark href="#apps">
        <DotGrid colors={["#d95a4e", "#57a56a", "#e0aa3a"]} />
        Apps
      </Bookmark>
      <Bookmark href="#office">
        <FourSquares size={9} />
        Office 365 E3 - sign...
      </Bookmark>
      <Bookmark href="#admin">
        <OfficeMark />
        Microsoft 365 admi...
      </Bookmark>
      <Bookmark href="#fo">
        <D365 />
        D365 FO
      </Bookmark>
      <Bookmark href="#reading">
        <svg width="9" height="9" viewBox="0 0 9 9" fill="none" stroke="currentColor">
          <path d="M.5.5h8v8h-8zM2 3h1M4 3h3M2 6h1M4 6h3" />
        </svg>
        Reading list
      </Bookmark>
    </Bookmarks>
    <AppArea>
      <RecordBackdrop />
      <PostingDialog />
    </AppArea>
    <RemoteTaskbar>
      <RemoteApp aria-label="Start">
        <FaWindows size={11} color="#fff" />
      </RemoteApp>
      <RemoteApp aria-label="Search">
        <SearchGlass size={10} />
      </RemoteApp>
      <RemoteApp aria-label="Task view">
        <TaskViewSmall />
      </RemoteApp>
      <RemoteApp aria-label="Internet Explorer">
        <InternetExplorer />
      </RemoteApp>
      <RemoteApp aria-label="File Explorer">
        <Folder size={14} />
      </RemoteApp>
      <RemoteApp aria-label="Services">
        <Cogs />
      </RemoteApp>
      <RemoteApp aria-label="Server">
        <ServerIcon />
      </RemoteApp>
      <RemoteApp $active aria-label="Chrome">
        <Chrome />
      </RemoteApp>
      <RemoteTray>
        <ChevronUp size={9} />
        <SpeakerSmall />
        <NetworkSmall />
        <time>
          8:15 AM
          <br />
          7/14/2021
        </time>
        <NoteSmall />
      </RemoteTray>
    </RemoteTaskbar>
  </Desktop>
);

const MeetingStage = () => (
  <Stage>
    <Mountains viewBox="0 0 1280 530" preserveAspectRatio="none">
      <path
        d="M0 134q20-10 35 4t20 4q45-30 70-8 40 48 65 24 20-16 30-20h845v70q60 5 85 40 40 25 130 25v257H0z"
        fill="#384153"
        opacity=".5"
      />
      <path
        d="M0 308q45 2 65-4 25 0 45 12 10-2 30-14 50-16 65-8l10 7h850v90q60-30 100-10 60 20 115-20v169H0z"
        fill="#303a46"
        opacity=".5"
      />
    </Mountains>
    <DragStrip>
      <DragHandle />
    </DragStrip>
    <ShareArea>
      <div />
      <SharedDesktop />
      <ZoomColumn>
        <ZoomPanel>
          <RoundButton aria-label="Take screenshot">
            <CameraSolid />
          </RoundButton>
          <RoundButton aria-label="Zoom in">
            <Plus size={25} strokeWidth={2} />
          </RoundButton>
          <ZoomLevel>63%</ZoomLevel>
          <RoundButton aria-label="Zoom out">
            <Minus size={24} strokeWidth={2} />
          </RoundButton>
          <RoundButton aria-label="Open in new window">
            <PopOut />
          </RoundButton>
        </ZoomPanel>
      </ZoomColumn>
    </ShareArea>
    <Presenting>Nexgen It is presenting</Presenting>
    <Controls>
      <Control>
        <ControlCircle $color="#4c535d">
          <MicOffIcon />
        </ControlCircle>
        Mic
      </Control>
      <Control>
        <ControlCircle $color="#4c535d">
          <CameraOffIcon />
        </ControlCircle>
        Camera
      </Control>
      <Control>
        <ControlCircle $color="#98a3b7">
          <ScreenOffIcon />
        </ControlCircle>
        Screen
      </Control>
      <Control>
        <ControlCircle $color="#d3174f">
          <LeaveIcon />
        </ControlCircle>
        Leave
      </Control>
    </Controls>
    <Watermark>
      <p>Activate Windows</p>
      <p>Go to Settings to activate Windows.</p>
    </Watermark>
    <Pointer width="12" height="18" viewBox="0 0 12 18">
      <path d="M1 1v14l3-3 2.500 5 2-1L6.500 11H11z" fill="#fff" stroke="#222" strokeWidth=".6" />
    </Pointer>
  </Stage>
);

function App() {
  return (
    <Screen>
      <GlobalStyle />
      <MeetingWindow>
        <TitleBar>
          <Brand>
            <Daisy />
            <span>
              <b>GoTo</b>Meeting
            </span>
            <Caret />
          </Brand>
          <WindowButtons>
            <button aria-label="Minimize">
              <svg width="16" height="16" viewBox="0 0 16 16">
                <path d="M0 8h16" stroke="currentColor" strokeWidth="1.500" />
              </svg>
            </button>
            <button aria-label="Restore">
              <svg width="16" height="16" viewBox="0 0 16 16" fill="none" stroke="currentColor" strokeWidth="1.500">
                <path d="M2 6h8v8H2zM6 6V2h8v8h-4" />
              </svg>
            </button>
            <button aria-label="Close">
              <svg width="16" height="16" viewBox="0 0 16 16" fill="none" stroke="currentColor" strokeWidth="1.700">
                <path d="M2 2l12 12M14 2L2 14" />
              </svg>
            </button>
          </WindowButtons>
        </TitleBar>
        <TalkingBar>
          <span>Talking:</span>
          <HideButton>
            Hide Everyone <Sorter />
          </HideButton>
          <HeaderActions>
            <button aria-label="People">
              <People />
            </button>
            <button aria-label="Chat">
              <Bubble />
            </button>
            <button aria-label="Settings">
              <Gear />
            </button>
            <button aria-label="More">
              <svg width="18" height="18" viewBox="0 0 18 18" fill="#fff">
                <circle cx="9" cy="3" r="2" />
                <circle cx="9" cy="9" r="2" />
                <circle cx="9" cy="15" r="2" />
              </svg>
            </button>
          </HeaderActions>
        </TalkingBar>
        <MeetingStage />
      </MeetingWindow>
      <Taskbar>
        <TaskButton aria-label="Start">
          <StartIcon />
        </TaskButton>
        <SearchBox>
          <SearchGlass size={16} />
          <input placeholder="Type here to search" />
        </SearchBox>
        <TaskButton aria-label="Cortana">
          <svg width="16" height="16" viewBox="0 0 16 16">
            <circle cx="8" cy="8" r="6.500" fill="none" stroke="#fff" strokeWidth="2" />
          </svg>
        </TaskButton>
        <TaskButton aria-label="Task view">
          <TaskViewIcon />
        </TaskButton>
        <TaskButton aria-label="File Explorer">
          <Folder size={22} />
        </TaskButton>
        <TaskButton aria-label="Edge">
          <EdgeIcon />
        </TaskButton>
        <TaskButton aria-label="Mail">
          <MailIcon />
        </TaskButton>
        <TaskButton aria-label="Store">
          <StoreIcon />
        </TaskButton>
        <TaskButton aria-label="Firefox">
          <FirefoxIcon />
        </TaskButton>
        <TaskButton $active aria-label="GoToMeeting">
          <GoToIcon />
        </TaskButton>
        <TaskButton $running aria-label="OBS Studio">
          <ObsIcon />
        </TaskButton>
        <Tray>
          <CloudIcon />
          <span>29°C</span>
          <span>AQI 58</span>
          <ChevronUp size={14} />
          <MicTray />
          <BatteryTray />
          <WifiTray />
          <Language>ENG</Language>
          <HostClock>
            08:17
            <br />
            14-07-2021
          </HostClock>
          <NotificationTray />
          <ShowDesktop />
        </Tray>
      </Taskbar>
    </Screen>
  );
}

export default App;
